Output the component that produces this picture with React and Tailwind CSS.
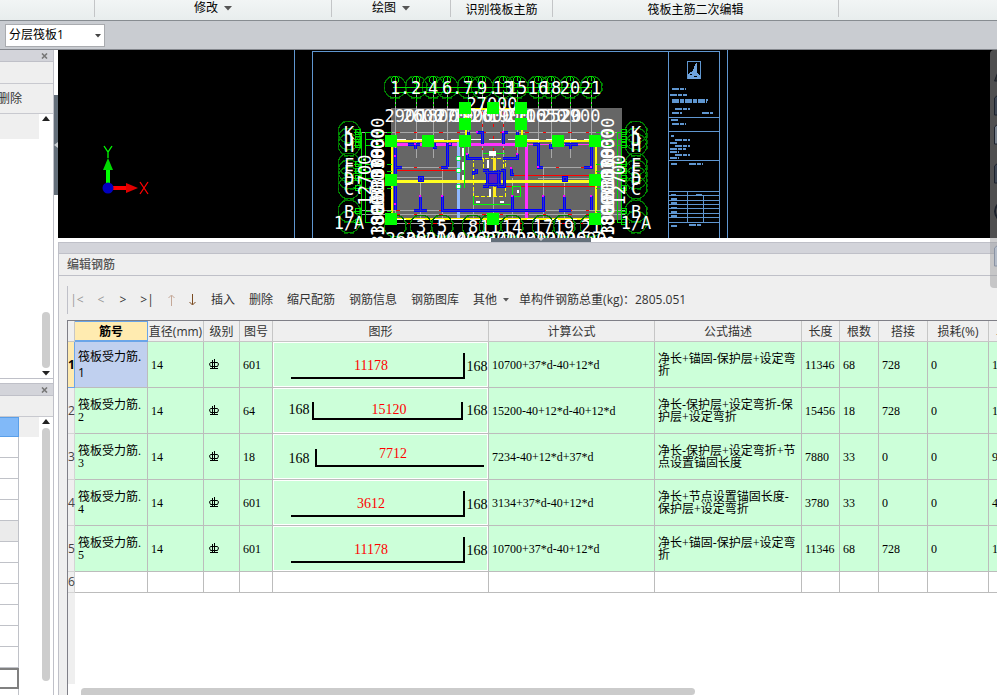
import clsx from 'clsx'

const ui = 'font-["Open_Sans","Noto_Sans_CJK_SC",sans-serif]'
const song = 'font-["Liberation_Serif","Noto_Sans_CJK_SC",serif]'

const columns = [
  { title: '筋号', width: 73 },
  { title: '直径(mm)', width: 56 },
  { title: '级别', width: 36 },
  { title: '图号', width: 33 },
  { title: '图形', width: 216 },
  { title: '计算公式', width: 166 },
  { title: '公式描述', width: 147 },
  { title: '长度', width: 38 },
  { title: '根数', width: 39 },
  { title: '搭接', width: 49 },
  { title: '损耗(%)', width: 61 },
]

const bendRight = (text) => ({
  points: '18,36 191,36 191,11',
  texts: [
    { x: 98, y: 28, text, main: true },
    { x: 204, y: 29, text: '168' },
  ],
})

const rows = [
  {
    shape: bendRight('11178'), code: '601', formula: '10700+37*d-40+12*d',
    note: ['净长+锚固-保护层+设定弯', '折'], length: 11346, count: 68, lap: 728, weight: '1',
  },
  {
    shape: {
      points: '40,14 40,31 189,31 189,14',
      texts: [
        { x: 26, y: 26, text: '168' },
        { x: 116, y: 26, text: '15120', main: true },
        { x: 204, y: 27, text: '168' },
      ],
    },
    code: '64', formula: '15200-40+12*d-40+12*d',
    note: ['净长-保护层+设定弯折-保', '护层+设定弯折'], length: 15456, count: 18, lap: 728, weight: '1',
  },
  {
    shape: {
      points: '43,15 43,32 211,32',
      texts: [
        { x: 26, y: 29, text: '168' },
        { x: 120, y: 24, text: '7712', main: true },
      ],
    },
    code: '18', formula: '7234-40+12*d+37*d',
    note: ['净长-保护层+设定弯折+节', '点设置锚固长度'], length: 7880, count: 33, lap: 0, weight: '9',
  },
  {
    shape: bendRight('3612'), code: '601', formula: '3134+37*d-40+12*d',
    note: ['净长+节点设置锚固长度-', '保护层+设定弯折'], length: 3780, count: 33, lap: 0, weight: '4',
  },
  {
    shape: bendRight('11178'), code: '601', formula: '10700+37*d-40+12*d',
    note: ['净长+锚固-保护层+设定弯', '折'], length: 11346, count: 68, lap: 728, weight: '1',
  },
]

function Caret({ className, up }) {
  return (
    <svg width="8" height="5" viewBox="0 0 8 5" className={clsx('shrink-0', className)} aria-hidden="true">
      <path d={up ? 'M0 5L4 0L8 5Z' : 'M0 0H8L4 4.5Z'} fill="currentColor" />
    </svg>
  )
}

function Ribbon() {
  return (
    <div className="flex h-[21px] shrink-0 border-b border-[#878c91] bg-linear-to-b from-[#f2f5f5] to-[#e8eded] text-xs leading-4">
      <div className="mb-[3px] w-[95px] shrink-0 border-r border-[#c3c5c7]" />
      <div className="mb-[3px] flex w-[237px] shrink-0 items-start justify-center border-r border-[#c3c5c7]">
        <button className="flex items-center gap-1.5">修改<Caret className="text-[#555]" /></button>
      </div>
      <div className="mb-[3px] flex w-[119px] shrink-0 items-start justify-center border-r border-[#c3c5c7]">
        <button className="flex items-center gap-1.5">绘图<Caret className="text-[#555]" /></button>
      </div>
      <div className="mb-[3px] flex w-[102px] shrink-0 justify-center border-r border-[#c3c5c7] leading-5">识别筏板主筋</div>
      <div className="mb-[3px] flex w-[286px] shrink-0 justify-center border-r border-[#c3c5c7] leading-5">筏板主筋二次编辑</div>
    </div>
  )
}

function LayerBar() {
  return (
    <div className="flex h-[29px] shrink-0 items-center border-b border-[#85888e] bg-[#c9ccd1] pl-[5px]">
      <div className="relative">
        <select aria-label="分层" className="block h-[23px] w-[100px] appearance-none border border-[#a9abaf] bg-white pl-[3px] text-xs">
          <option>分层筏板1</option>
        </select>
        <svg width="6" height="4" viewBox="0 0 6 4" className="pointer-events-none absolute top-[10px] right-1 text-[#444]">
          <path d="M0 0H6L3 3.5Z" fill="currentColor" />
        </svg>
      </div>
    </div>
  )
}

function PanelHead() {
  return (
    <div className="flex h-[12px] shrink-0 items-center justify-end border-b border-[#bfc0c8] bg-[#d3d4da] pr-[5px]">
      <button aria-label="关闭">
        <svg width="7" height="6" viewBox="0 0 7 6" className="block">
          <path d="M1 0.5L6 5.5M6 0.5L1 5.5" stroke="#777" strokeWidth="1.6" />
        </svg>
      </button>
    </div>
  )
}

function Sidebar() {
  return (
    <aside className="flex w-[54px] shrink-0 flex-col border-r border-[#bfc0c8] bg-white text-xs">
      <div className="flex h-[329px] shrink-0 flex-col border-b border-[#bfc0c8]">
        <PanelHead />
        <div className="h-[22px] shrink-0 border-b border-[#c8c9cf] bg-[#efefef]" />
        <div className="flex h-[30px] shrink-0 items-center border-b border-[#c8c9cf] bg-[#efefef]">
          <button className="-ml-0.5 text-[#333]">删除</button>
        </div>
        <div className="flex min-h-0 flex-1">
          <div className="h-[25px] flex-1 bg-[#efefef]" />
          <div className="flex w-[14px] flex-col items-center pt-[2px] pb-[2px] text-[#222]">
            <Caret up />
            <div className="flex-1" />
            <div className="mb-[3px] h-14 w-2 rounded-full bg-[#cdcdcd]" />
            <Caret />
          </div>
        </div>
      </div>
      <div className="mt-1 flex min-h-0 flex-1 flex-col border-t border-[#bfc0c8]">
        <PanelHead />
        <div className="h-[21px] shrink-0 border-b border-[#c8c9cf] bg-[#efefef]" />
        <div className="flex min-h-0 flex-1">
          <div className="w-[19px] shrink-0 overflow-hidden">
            <div className="h-5 border border-l-0 border-[#5a9fe8] bg-[#81b9f8]" />
            {[0, 1, 2, 3, 4, 5, 6, 7, 8, 9, 10].map((i) => (
              <div key={i} className={clsx('h-[21px] border-r border-b border-[#c0c2c8]', i === 4 && 'bg-[#ebebeb]')} />
            ))}
            <div className="h-[21px] border-2 border-l-0 border-[#808080]" />
            <div className="h-[21px] border-r border-[#c0c2c8]" />
          </div>
          <div className="h-5 flex-1 bg-[#efefef]" />
          <div className="flex w-[14px] flex-col items-center gap-1 bg-white pt-[2px] pb-[14px] text-[#222]">
            <Caret up />
            <div className="w-2 flex-1 rounded-full bg-[#cdcdcd]" />
          </div>
        </div>
      </div>
    </aside>
  )
}

const topAxes = [[395, '1'], [416, '2'], [433, '4'], [447, '6'], [468, '7'], [482, '9'], [503, '13'], [517, '15'], [538, '16'], [551, '18'], [570, '20'], [591, '21']]
const bottomAxes = [[395, ''], [421, '3'], [442, '5'], [473, '8'], [490, '11'], [512, '14'], [543, '17'], [564, '19'], [591, '21']]
const sideAxes = [[132, 'K'], [139, 'J'], [145, 'H'], [164, 'F'], [171, 'E'], [178, 'D'], [188, 'C'], [211, 'B'], [222, '1/A']]
const sideDims = [138, 149, 159, 168, 178, 191, 204, 216, 225]
const handles = [[391, 141], [428, 141], [465, 141], [465, 124], [465, 108], [493, 108], [521, 108], [521, 124], [521, 141], [558, 141], [595, 141], [391, 180], [595, 180], [391, 219], [493, 219], [595, 219]]

const walls =
  'M395 148V210M395 167H402M408 144H420M415 144V149M434 143V147H437M447 167V144H452M441 167H448' +
  'M419 177H422V180H419ZM420 197V210M414 210H427M442 196V210H543V196M467 154V158H482M482 144V132H477M468 132V140' +
  'M473 175V172H476V169M483 170H487V186H483M501 170H504V186H498V170M485 172H501M485 184H501' +
  'M503 144V132H508M517 132V142M517 154V158H503M533 144H538V167H543M550 144V147H553M565 144H578M570 144V149' +
  'M591 144V167H584M563 177H566V180H563ZM564 197V210M559 210H571M591 196V210M511 169V174H514M512 196V210'

const wallEnds = [[395, 156], [420, 196], [442, 196], [415, 144], [450, 144], [512, 196], [543, 196], [564, 196], [591, 196], [538, 167], [591, 167], [395, 204], [511, 168], [477, 132], [503, 132], [467, 154], [517, 154]]

function AxisMark({ x, y }) {
  return (
    <>
      <circle cx={x} cy={y} r="11" fill="none" stroke="#009000" />
      <path d={`M${x - 5} ${y - 11}H${x + 5}L${x + 11} ${y - 4}V${y + 4}L${x + 5} ${y + 11}H${x - 5}L${x - 11} ${y + 4}V${y - 4}Z`} fill="none" stroke="#007000" strokeDasharray="4 2" />
    </>
  )
}

function Drawing() {
  return (
    <svg className="block h-full w-full" aria-label="结构平面图" shapeRendering="crispEdges">
      {/* model units start at the window corner */}
      <g transform="translate(-58 -50)">
        {/* drawing frame and title block */}
        <g stroke="#5f96d0" fill="none">
          <path d="M294.500 50V238M312.500 238V51.500H719.500V238M668.500 51V238M727.500 50V238" />
          <path d="M668 117.500H719M668 131.500H719M668 160.500H719M668 191.500H719M668 195.500H719M668 200.500H719M668 204.500H719M668 208.500H719M668 213.500H719M668 217.500H719M668 222.500H719M687.500 191V222M703.500 195V222" />
          <path d="M687.500 61.500H700.500V78.500H687.500Z" />
          <path d="M672 88.500H686M670 94.500H687M672 99.500H708M672 101.500H707M675 108.500H690M672 112.500H682M702 112.500H713M671 119.500H678M672 123.500H686M671 135.500H674M675 139.500H690M670 142.500H677M675 145.500H690M670 148.500H686M670 151.500H679M675 154.500H690M670 157.500H679M671 163.500H677M689 163.500H703M671 194.500H676M696 194.500H702M671 198.500H677M671 202.500H677M671 207.500H677M671 211.500H677M671 215.500H677M671 225.500H677M689 224.500H701" strokeWidth="2" strokeDasharray="7 1 4 1" />
        </g>
        <path d="M688 75L690 72H692L696 63H697V73L700 75V79H688Z" fill="#6fa3dc" />
        <path d="M690 74h2v1h-2zM694 76h3v1h-3z" fill="#000" />

        {/* coordinate axes */}
        <g shapeRendering="auto">
          <path d="M106 165H110V190H106Z" fill="#00ff00" />
          <path d="M108 158L113 170H103Z" fill="#00d800" />
          <path d="M108 186H127V190H108Z" fill="#f00" />
          <path d="M138 188L126 183V193Z" fill="#e00000" />
          <circle cx="108" cy="188" r="5.500" fill="#0000c0" />
          <path d="M104 146L108 152L112 146M108 152V158" stroke="#00ff00" strokeWidth="1.300" fill="none" />
          <path d="M140 182L148 194M148 182L140 194" stroke="#f00" strokeWidth="1.300" />
        </g>

        {/* slab */}
        <path d="M391 108H622V220H391Z" fill="#666" />
        <g stroke="#a8a8a8" fill="none">
          {topAxes.map(([x]) => <path key={x} d={`M${x + 0.5} 95V158`} />)}
          <path d="M362 132.500H625M395 167.500H458M538 167.500H591M395 177.500H442M538 178.500H591M362 210.500H625M362 214.500H625M395.500 140V220M420.500 180V218M442.500 167V218M473.500 190V218M493.500 150V218M512.500 178V218M543.500 167V218M564.500 180V218M390 223.500H598" />
        </g>
        <g stroke="#f00" fill="none">
          <path d="M395 170.500H458M510 175.500H595M504 186.500H595" />
          <path d="M396 132.500H622M396 167.500H458M538 167.500H591M396 210.500H600M396 214.500H600M390 223.500H600" strokeDasharray="4 14 3 22" />
          <path d="M493.500 112V160M503.500 112V150M482.500 112V150M516.500 112V150" strokeDasharray="3 9" />
        </g>
        <path d="M391 144.500H528" stroke="#ff30ff" strokeWidth="3" />
        <path d="M528 144.500H593" stroke="#ff30ff" />
        <path d="M526.500 144V218" stroke="#ff30ff" strokeWidth="3" />
        <path d="M458.500 141V219" stroke="#8fb8ff" strokeWidth="3" />
        <path d="M395 181.500H595" stroke="#ffff20" strokeWidth="3" />
        <path d="M391.500 219V140.500H465.500V108.500H521.500V140.500H595.500V218.500H391" stroke="#ffff00" strokeWidth="2" fill="none" />
        <path d="M394 139.500H592M394 219.500H592" stroke="#fff" strokeDasharray="12 7" />
        <path d="M473 158.500H505V196.500H473ZM483 158V172M503 158V172" stroke="#ffff00" strokeDasharray="4 2" fill="none" />
        <path d="M494.500 158V170M494.500 187V196" stroke="#ffe820" strokeWidth="3" />
        <path d="M464.500 142V188M483 153.500H505M473 204.500H512V186H520V196H512M473 196V204" stroke="#00ff00" fill="none" />
        <path d="M487 172H501V184H487Z" fill="#6020b0" />
        <path d="M463 148v8M463 162v8M463 175v5M490 152h5v3h-5zM490 189v8M476 202h4M500 202h4M518 190v3M488 160v8" stroke="#fff" strokeWidth="2" fill="#fff" />
        <path d={walls} stroke="#0000ff" strokeWidth="3" fill="none" />
        <path d={walls} stroke="#666" strokeOpacity="0.5" fill="none" />
        {wallEnds.map(([x, y]) => <rect key={`${x}-${y}`} x={x - 1} y={y - 1} width="2" height="2" fill="#ff00ff" />)}
        {[158, 170, 186].map((y) => <circle key={y} cx="458.500" cy={y + 0.5} r="2" fill="#fff" stroke="#00ff50" />)}

        {/* axis bubbles */}
        {topAxes.map(([x]) => <AxisMark key={x} x={x} y={87} />)}
        {bottomAxes.map(([x]) => <AxisMark key={x} x={x} y={226} />)}
        {sideAxes.map(([y]) => <AxisMark key={y} x={349} y={y} />)}
        {sideAxes.map(([y]) => <AxisMark key={y} x={636} y={y} />)}
        <g stroke="#00e000" fill="none">
          <path d="M393 87.500H592M393 92.500H592M365.500 132V223M361.500 132V223M617.500 132V223M621.500 132V223" />
          {topAxes.map(([x]) => <path key={x} d={`M${x} 76V106`} strokeDasharray="5 2" />)}
          {topAxes.map(([x]) => <circle key={x} cx={x} cy="80" r="3.500" />)}
          {sideAxes.map(([y]) => <path key={y} d={`M354 ${y}.5H392M596 ${y}.5H630`} strokeDasharray="8 3" />)}
          {sideAxes.map(([y]) => <circle key={y} cx="358" cy={y} r="3" />)}
          {sideAxes.map(([y]) => <circle key={y} cx="624" cy={y} r="3" />)}
        </g>
        <g fill="#fff" fontFamily='"DejaVu Sans Mono", monospace' fontSize="17" textAnchor="middle">
          {topAxes.map(([x, t]) => <text key={t} x={x} y="94">{t}</text>)}
          <text x="405" y="94">.</text>
          <text x="425" y="94">.</text>
          <text x="457" y="94">.</text>
          <text x="476" y="94">.</text>
          <text x="493" y="94">.</text>
          <text x="492" y="110">27000</text>
          <text x="405" y="122">2900</text>
          <text x="423" y="122">2600</text>
          <text x="438" y="122">1800</text>
          <text x="456" y="122">2700</text>
          <text x="473" y="122">1900</text>
          <text x="492" y="122">2600</text>
          <text x="509" y="122">1900</text>
          <text x="526" y="122">2700</text>
          <text x="546" y="122">1650</text>
          <text x="561" y="122">2520</text>
          <text x="580" y="122">2900</text>
          {bottomAxes.map(([x, t]) => <text key={x} x={x} y="233">{t}</text>)}
          {['2600', '3600', '2100', '4400', '2600', '2700', '1900', '3100', '2100', '2600'].map((t, i) => (
            <text key={i} x={406 + i * 20} y="245">{t}</text>
          ))}
          {sideAxes.map(([y, t]) => <text key={t} x="349" y={y + 7}>{t}</text>)}
          {sideAxes.map(([y, t]) => <text key={t} x="636" y={y + 7}>{t}</text>)}
          {sideDims.map((y, i) => (
            <text key={y} transform={`translate(384 ${y}) rotate(-90)`}>{i % 2 ? '1800' : '3300'}</text>
          ))}
          {sideDims.map((y, i) => (
            <text key={y} transform={`translate(614 ${y}) rotate(-90)`}>{i % 2 ? '1800' : '3300'}</text>
          ))}
          <text transform="translate(371 180) rotate(-90)">12700</text>
          <text transform="translate(625 180) rotate(-90)">12700</text>
        </g>
        {handles.map(([x, y]) => <rect key={`${x}-${y}`} x={x - 6} y={y - 6} width="12" height="12" fill="#00ff00" />)}
      </g>
    </svg>
  )
}

function ViewTools() {
  return (
    <div className="absolute top-0 right-0 h-[238px] w-[7px] overflow-hidden rounded-l bg-[#9e9ea0]/50">
      <svg width="7" height="238" viewBox="0 0 7 238" fill="none" stroke="#1d222c">
        <path d="M8 22L4.500 31H8" fill="#333" />
        <path d="M8 45L4.500 48V65H8M8 113L4.500 116V133H8" fill="#3f4754" />
        <path d="M8 74L4.500 77V94H8" fill="#77808c" />
        <path d="M8 195L4.500 198V216H8" fill="#b4bcc8" stroke="#8a93a3" />
        <path d="M8 154Q2 161 8 169" strokeWidth="2" />
      </svg>
    </div>
  )
}

function Toolbar() {
  return (
    <div className="flex h-11 shrink-0 items-center pt-1 pl-2">
      <div className="flex h-7 items-center gap-[14px] border-l border-[#bfc0c8] pl-[3px] text-xs whitespace-nowrap text-[#333]">
        <button className="flex w-3 justify-center text-[#999]">|&lt;</button>
        <button className="flex w-2 justify-center text-[#999]" aria-label="上一条">&lt;</button>
        <button className="flex w-2 justify-center" aria-label="下一条">&gt;</button>
        <button className="flex w-3 justify-center">&gt;|</button>
        <button className="w-2" aria-label="上移">
          <svg width="8" height="12" viewBox="0 0 8 12" fill="none" stroke="#c4a898"><path d="M4.500 12V1.500M1.500 4L4.500 1L7.500 4" /></svg>
        </button>
        <button className="w-2" aria-label="下移">
          <svg width="8" height="12" viewBox="0 0 8 12" fill="none" stroke="#7a4a20"><path d="M3.500 0V10.500M0.500 8L3.500 11L6.500 8" /></svg>
        </button>
        <button>插入</button>
        <button>删除</button>
        <button>缩尺配筋</button>
        <button>钢筋信息</button>
        <button>钢筋图库</button>
        <button className="flex items-center gap-1.5">
          其他
          <svg width="6" height="4" viewBox="0 0 6 4"><path d="M0 0H6L3 3.500Z" fill="#555" /></svg>
        </button>
        <span className="-ml-1">单构件钢筋总重(kg)：2805.051</span>
      </div>
    </div>
  )
}

function Grade() {
  return (
    <svg width="10" height="11" viewBox="0 0 10 11" role="img" aria-label="HRB400" fill="none" stroke="#000">
      <path d="M1.500 3.500H8.500L9.500 5L8.500 7.500H1.500L0.500 5Z" />
      <path d="M3.500 1V10M5.500 0V10M1 9.500H9" />
    </svg>
  )
}

function BarShape({ shape }) {
  return (
    <svg width="215" height="45" viewBox="0 0 215 45" className="block">
      <rect x="0.5" y="0.5" width="214" height="44" fill="none" stroke="#fff" />
      <polyline points={shape.points} fill="none" stroke="#000" strokeWidth="2" />
      <g fontSize="14" textAnchor="middle">
        {shape.texts.map((t) => (
          <text key={t.x} x={t.x} y={t.y} fill={t.main ? '#f00' : '#000'}>{t.text}</text>
        ))}
      </g>
    </svg>
  )
}

const th = 'h-[21px] border-r border-b border-[#c6c6c6] bg-[#efefef] p-0 pt-0.5 text-center font-normal whitespace-nowrap'
const td = 'border-r border-b border-[#bcbcbc] p-0 pl-[3px] align-middle'

function RebarTable() {
  return (
    <table className="w-full table-fixed border-separate border-spacing-0 text-xs leading-3">
      <colgroup>
        <col className="w-[7px]" />
        {columns.map((c) => <col key={c.title} style={{ width: c.width }} />)}
        <col />
      </colgroup>
      <thead className="text-[#333]">
        <tr>
          <th className={th} />
          {columns.map((c, i) => (
            <th key={c.title} className={i === 0 ? 'h-[21px] border-t border-r border-b-2 border-[#6aa5e8] bg-[#ffebb0] p-0 pt-0.5 font-bold text-black' : th}>
              {c.title}
            </th>
          ))}
          <th className="overflow-hidden border-b border-[#c6c6c6] bg-[#efefef] p-0 pt-0.5 pl-[7px] text-left font-normal whitespace-nowrap">单重(kg)</th>
        </tr>
      </thead>
      <tbody className={clsx(song, 'bg-[#ccffd9] text-black')}>
        {rows.map((r, i) => (
          <tr key={i} className="h-[46px]">
            <th className={clsx(ui, 'border-r border-b p-0 text-left', i === 0 ? 'border-[#6aa5e8] bg-[#ffebb0] font-bold' : 'border-[#d4d4d4] bg-[#efefef] font-normal text-[#444]')}>{i + 1}</th>
            <td className={clsx(td, i === 0 && ui, i === 0 && 'bg-[#c0d0ef] leading-4')}>筏板受力筋.<br />{i + 1}</td>
            <td className={td}>14</td>
            <td className={clsx(td, 'pl-[5px]')}><Grade /></td>
            <td className={td}>{r.code}</td>
            <td className="border-r border-b border-[#bcbcbc] p-0"><BarShape shape={r.shape} /></td>
            <td className={td}>{r.formula}</td>
            <td className={clsx(td, 'whitespace-nowrap')}>{r.note[0]}<br />{r.note[1]}</td>
            <td className={td}>{r.length}</td>
            <td className={td}>{r.count}</td>
            <td className={td}>{r.lap}</td>
            <td className={td}>0</td>
            <td className="border-b border-[#bcbcbc] p-0 pl-[3px]">{r.weight}</td>
          </tr>
        ))}
        <tr className="h-[21px] bg-white">
          <th className={clsx(ui, 'border-r border-b border-[#d4d4d4] bg-[#efefef] p-0 text-left font-normal text-[#444]')}>6</th>
          {columns.map((c) => <td key={c.title} className={td} />)}
          <td className="border-b border-[#bcbcbc] p-0" />
        </tr>
      </tbody>
    </table>
  )
}

function RebarEditor() {
  return (
    <section className="flex min-h-0 flex-1 flex-col border-t border-l border-[#bfc0c8] bg-[#efefef]">
      <div className="h-[11px] shrink-0 border-b border-[#bfc0c8] bg-[#d3d4da]" />
      <h2 className="flex h-[22px] shrink-0 items-center border-b border-[#bfc0c8] pl-2 text-xs font-medium text-[#555]">编辑钢筋</h2>
      <Toolbar />
      <div className="ml-2 flex min-h-0 flex-1 flex-col border-t border-l border-[#7f7f87] bg-white">
        <RebarTable />
        <div className="w-[7px] flex-1 bg-[#efefef]" />
        <div className="flex h-[11px] shrink-0 items-end pl-[13px]">
          <div className="h-[7px] w-[67%] rounded-tl-full rounded-r-full bg-[#cbcbcb]" />
        </div>
      </div>
    </section>
  )
}

export default function App() {
  return (
    <div className={clsx(ui, 'flex h-screen flex-col overflow-hidden bg-white text-black')}>
      <Ribbon />
      <LayerBar />
      <div className="flex min-h-0 flex-1">
        <Sidebar />
        <div className="w-1 shrink-0 pt-[45px]">
          <button aria-label="折叠" className="flex h-[100px] w-1 items-center bg-[#646f7a]">
            <svg width="4" height="6" viewBox="0 0 4 6"><path d="M4 0V6L0 3Z" fill="#ccd0d4" /></svg>
          </button>
        </div>
        <main className="relative flex min-w-0 flex-1 flex-col">
          <div className="h-[188px] shrink-0 bg-black">
            <Drawing />
          </div>
          <div className="flex h-1 shrink-0 justify-center pl-[26px]">
            <button aria-label="折叠" className="flex h-1 w-[100px] items-start justify-center bg-[#646f7a]">
              <svg width="6" height="3" viewBox="0 0 6 3"><path d="M0 0H6L3 3Z" fill="#ccd0d4" /></svg>
            </button>
          </div>
          <RebarEditor />
          <ViewTools />
        </main>
      </div>
    </div>
  )
}
